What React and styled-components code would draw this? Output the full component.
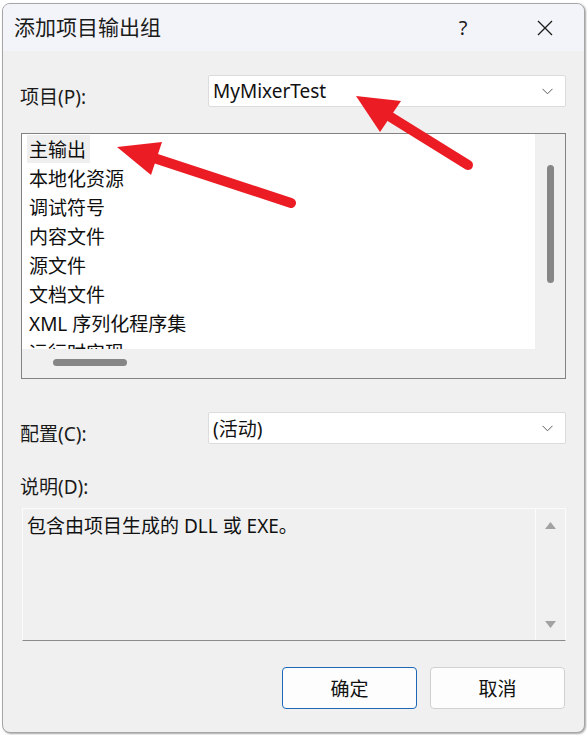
import React from "react";
import styled, { createGlobalStyle } from "styled-components";

const GlobalStyle = createGlobalStyle`
  html, body {
    margin: 0;
    padding: 0;
    background: #ffffff;
  }
  body {
    font-family: "Noto Sans", "Noto Sans CJK SC", sans-serif;
    color: #1a1a1a;
  }
`;

const Page = styled.div`
  position: relative;
  width: 587px;
  height: 735px;
  overflow: hidden;
`;

const Window = styled.div`
  margin: 3px 0 0 2px;
  width: 581px;
  height: 728px;
  border: 1px solid #a6a6a6;
  border-radius: 8px;
  background: #f0f0f0;
  box-shadow: 1px 1px 2px rgba(0, 0, 0, 0.35);
  overflow: hidden;
  display: flex;
  flex-direction: column;
`;

const TitleBar = styled.div`
  height: 47px;
  background: #f3f4f9;
  display: flex;
  align-items: center;
  padding-left: 11px;
`;

const Title = styled.div`
  flex: 1;
  font-size: 21px;
  line-height: 26px;
  color: #1b1b1b;
  margin-top: -2px;
`;

const TitleButton = styled.div`
  width: ${p => p.$w}px;
  height: 46px;
  display: flex;
  align-items: center;
  justify-content: center;
  font-size: 20px;
  color: #1b1b1b;
`;

const Body = styled.div`
  flex: 1;
  display: flex;
  flex-direction: column;
  padding: 24px 18px 0 17px;
`;

const FieldRow = styled.div`
  display: grid;
  grid-template-columns: 188px 1fr;
  align-items: start;
  height: 32px;
  margin-top: ${p => p.$top || 0}px;
`;

const Label = styled.div`
  font-size: 19px;
  line-height: 23px;
  padding-top: ${p => p.$pad || 0}px;
  margin-top: ${p => p.$top || 0}px;
`;

const Combo = styled.div`
  height: 30px;
  background: #ffffff;
  border: 1px solid #dcdcdc;
  border-radius: 2px;
  display: flex;
  align-items: center;
  padding: 0 12px 0 4px;
  font-size: 19px;
  color: #111;
`;

const ComboText = styled.span`
  flex: 1;
  margin-top: -1px;
`;

const ListBox = styled.div`
  margin: 26px 0 0 1px;
  height: 244px;
  border: 1px solid #828282;
  background: #f0f0f0;
  display: grid;
  grid-template-columns: 1fr 30px;
  grid-template-rows: 215px 1fr;
`;

const Viewport = styled.div`
  background: #ffffff;
  overflow: hidden;
  padding-top: 1px;
`;

const Item = styled.div`
  height: 29px;
  display: flex;
  align-items: flex-start;
`;

const ItemText = styled.span`
  margin-left: 5px;
  height: 28px;
  padding: 0 4px 0 2px;
  font-size: 19px;
  line-height: 30px;
  color: #0f0f0f;
  background: ${p => (p.$selected ? "#efefef" : "transparent")};
`;

const VTrack = styled.div`
  display: flex;
  justify-content: center;
  padding-top: 31px;
  padding-left: 1px;
`;

const VThumb = styled.div`
  width: 7px;
  height: 118px;
  border-radius: 4px;
  background: #868686;
`;

const HTrack = styled.div`
  grid-column: 1 / 2;
  padding: 10px 0 0 31px;
`;

const HThumb = styled.div`
  width: 74px;
  height: 7px;
  border-radius: 4px;
  background: #868686;
`;

const DescBox = styled.div`
  margin: 9px 0 0 2px;
  height: 131px;
  border: 1px solid #fbfbfb;
  border-bottom: 1px solid #8a8a8a;
  background: #f0f0f0;
  display: grid;
  grid-template-columns: 1fr 30px;
`;

const DescText = styled.div`
  font-size: 19px;
  line-height: 24px;
  padding: 5px 0 0 4px;
  color: #111;
`;

const DescScroll = styled.div`
  border-left: 1px solid #fbfbfb;
  display: flex;
  flex-direction: column;
  align-items: center;
  justify-content: space-between;
  padding: 13px 0 12px;
`;

const Buttons = styled.div`
  display: flex;
  justify-content: flex-end;
  gap: 13px;
  margin: 26px 1px 0 0;
`;

const Button = styled.div`
  width: 133px;
  height: 40px;
  border: 1px solid ${p => (p.$primary ? "#1f68b5" : "#d0d0d0")};
  border-radius: 4px;
  background: #fdfdfd;
  display: flex;
  align-items: center;
  justify-content: center;
  font-size: 19px;
  color: #111;
`;

const Overlay = styled.svg`
  position: absolute;
  top: 0;
  left: 0;
  pointer-events: none;
`;

const items = [
  "主输出",
  "本地化资源",
  "调试符号",
  "内容文件",
  "源文件",
  "文档文件",
  "XML 序列化程序集",
  "运行时实现",
];

const Chevron = () => (
  <svg width="11" height="7" viewBox="0 0 11 7">
    <polyline points="0.5,0.8 5.5,5.8 10.5,0.8" fill="none" stroke="#5c5c5c" strokeWidth="1" />
  </svg>
);

const Triangle = ({ down }) => (
  <svg width="11" height="7" viewBox="0 0 11 7">
    <polygon points={down ? "0,0 11,0 5.5,7" : "5.5,0 11,7 0,7"} fill="#a2a2a2" />
  </svg>
);

const Arrow = ({ tail, base, head }) => (
  <g>
    <line
      x1={tail[0]}
      y1={tail[1]}
      x2={base[0]}
      y2={base[1]}
      stroke="#ec1c24"
      strokeWidth="10"
      strokeLinecap="round"
    />
    <polygon points={head.map(p => p.join(",")).join(" ")} fill="#ec1c24" />
  </g>
);

const App = () => (
  <Page>
    <GlobalStyle />
    <Window>
      <TitleBar>
        <Title>添加项目输出组</Title>
        <TitleButton $w={86}>?</TitleButton>
        <TitleButton $w={78}>
          <svg width="16" height="16" viewBox="0 0 16 16">
            <path d="M1 1 L15 15 M15 1 L1 15" stroke="#1b1b1b" strokeWidth="1.3" />
          </svg>
        </TitleButton>
      </TitleBar>
      <Body>
        <FieldRow>
          <Label $pad={11}>项目(P):</Label>
          <Combo>
            <ComboText>MyMixerTest</ComboText>
            <Chevron />
          </Combo>
        </FieldRow>
        <ListBox>
          <Viewport>
            {items.map((text, i) => (
              <Item key={text}>
                <ItemText $selected={i === 0}>{text}</ItemText>
              </Item>
            ))}
          </Viewport>
          <VTrack>
            <VThumb />
          </VTrack>
          <HTrack>
            <HThumb />
          </HTrack>
        </ListBox>
        <FieldRow $top={33}>
          <Label $pad={11}>配置(C):</Label>
          <Combo>
            <ComboText>(活动)</ComboText>
            <Chevron />
          </Combo>
        </FieldRow>
        <Label $top={32}>说明(D):</Label>
        <DescBox>
          <DescText>包含由项目生成的 DLL 或 EXE。</DescText>
          <DescScroll>
            <Triangle />
            <Triangle down />
          </DescScroll>
        </DescBox>
        <Buttons>
          <Button $primary>确定</Button>
          <Button>取消</Button>
        </Buttons>
      </Body>
    </Window>
    <Overlay width="587" height="735" viewBox="0 0 587 735">
      <Arrow tail={[468, 165]} base={[389, 116]} head={[[356, 96], [401, 101], [380, 132]]} />
      <Arrow tail={[291, 203]} base={[154, 158]} head={[[117, 147], [162, 142], [151, 175]]} />
    </Overlay>
  </Page>
);

export default App;
